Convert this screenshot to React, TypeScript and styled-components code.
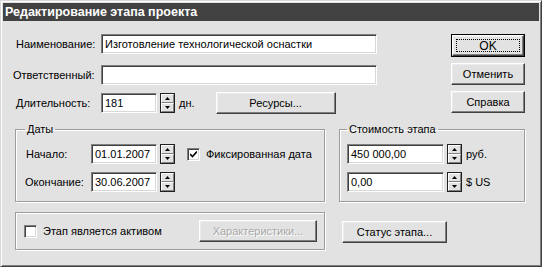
import React from "react";
import styled, { createGlobalStyle, css } from "styled-components";

const GlobalStyle = createGlobalStyle`
  html, body {
    margin: 0;
    padding: 0;
    background: #e2e2e2;
  }
  body {
    font-family: "Liberation Sans", Arial, sans-serif;
    font-size: 11px;
    color: #000;
  }
  * {
    box-sizing: border-box;
  }
`;

const raised = css`
  border-top: 1px solid #ffffff;
  border-left: 1px solid #ffffff;
  border-right: 1px solid #404040;
  border-bottom: 1px solid #404040;
  box-shadow: inset -1px -1px 0 #808080, inset 1px 1px 0 #ececec;
`;

const sunken = css`
  border-top: 1px solid #808080;
  border-left: 1px solid #808080;
  border-right: 1px solid #ffffff;
  border-bottom: 1px solid #ffffff;
  box-shadow: inset 1px 1px 0 #404040, inset -1px -1px 0 #d8d8d8;
`;

const Window = styled.div`
  width: 542px;
  height: 267px;
  display: flex;
  flex-direction: column;
  background: #e2e2e2;
  border-top: 1px solid #d8d8d8;
  border-left: 1px solid #d8d8d8;
  border-right: 1px solid #404040;
  border-bottom: 1px solid #404040;
  box-shadow: inset 1px 1px 0 #ffffff, inset -1px -1px 0 #808080;
  padding: 2px;
`;

const TitleBar = styled.div`
  height: 18px;
  flex-shrink: 0;
  background: #424242;
  color: #ffffff;
  font-weight: bold;
  font-size: 12.5px;
  line-height: 18px;
  padding-left: 2px;
`;

const Body = styled.div`
  flex: 1;
  display: flex;
  flex-direction: column;
  padding: 13px 14px 0 12px;
`;

const TopSection = styled.div`
  display: flex;
  justify-content: space-between;
`;

const Fields = styled.div`
  width: 362px;
  display: flex;
  flex-direction: column;
`;

const FieldRow = styled.div<{ $h?: number; $mb?: number }>`
  display: flex;
  align-items: center;
  height: ${({ $h }) => $h ?? 20}px;
  margin-bottom: ${({ $mb }) => $mb ?? 0}px;
`;

const Label = styled.span<{ $w: number; $indent?: number }>`
  width: ${({ $w }) => $w}px;
  padding-left: ${({ $indent }) => Math.max($indent ?? 0, 0)}px;
  margin-left: ${({ $indent }) => Math.min($indent ?? 0, 0)}px;
  margin-right: ${({ $indent }) => -Math.min($indent ?? 0, 0)}px;
  flex-shrink: 0;
  white-space: nowrap;
`;

const TextBox = styled.div<{ $w?: number }>`
  ${sunken};
  width: ${({ $w }) => ($w ? `${$w}px` : "auto")};
  flex: ${({ $w }) => ($w ? "none" : "1")};
  height: 20px;
  background: #ffffff;
  padding: 0 3px;
  line-height: 18px;
  white-space: nowrap;
  overflow: hidden;
`;

const Unit = styled.span`
  margin-left: 4px;
`;

const ButtonColumn = styled.div`
  display: flex;
  flex-direction: column;
  gap: 6px;
`;

const Button = styled.div<{ $w: number; $disabled?: boolean }>`
  ${raised};
  width: ${({ $w }) => $w}px;
  height: 22px;
  display: flex;
  align-items: center;
  justify-content: center;
  background: #e2e2e2;
  flex-shrink: 0;
  color: ${({ $disabled }) => ($disabled ? "#a8a8a8" : "#000")};
  text-shadow: ${({ $disabled }) => ($disabled ? "1px 1px 0 #ffffff" : "none")};
`;

const ResourcesButton = styled(Button)`
  margin-left: 21px;
`;

const DefaultButton = styled.div`
  width: 74px;
  height: 23px;
  border: 1px solid #000;
  display: flex;
`;

const DefaultInner = styled.div`
  ${raised};
  flex: 1;
  padding: 3px;
  display: flex;
`;

const FocusRect = styled.div`
  flex: 1;
  border: 1px dotted #000;
  display: flex;
  align-items: center;
  justify-content: center;
  font-size: 12px;
`;

const Spin = styled.div`
  width: 15px;
  height: 20px;
  margin-left: 3px;
  border: 1px solid #202020;
  display: flex;
  flex-direction: column;
  flex-shrink: 0;
`;

const SpinHalf = styled.div`
  flex: 1;
  display: flex;
  align-items: center;
  justify-content: center;
  background: #e2e2e2;
  border-top: 1px solid #ffffff;
  border-left: 1px solid #ffffff;
  border-bottom: 1px solid #808080;
  border-right: 1px solid #808080;
`;

const GroupsRow = styled.div`
  display: flex;
  gap: 14px;
  margin-top: 9px;
`;

const Group = styled.fieldset<{ $w?: number }>`
  margin: 0;
  width: ${({ $w }) => ($w ? `${$w}px` : "auto")};
  flex: ${({ $w }) => ($w ? "none" : "1")};
  border: 1px solid #9c9c9c;
  box-shadow: 1px 1px 0 #ffffff, inset 1px 1px 0 #ffffff;
  padding: 0 7px 9px 9px;
  min-width: 0;
`;

const CostGroup = styled(Group)`
  padding-left: 7px;
`;

const Legend = styled.legend`
  padding: 0 2px;
  margin-left: 0;
  line-height: 13px;
  font-size: 11px;
`;

const GroupBody = styled.div`
  display: flex;
  flex-direction: column;
  gap: 8px;
  padding-top: 8px;
`;

const CheckBox = styled.div`
  ${sunken};
  width: 13px;
  height: 13px;
  background: #ffffff;
  display: flex;
  align-items: center;
  justify-content: center;
  flex-shrink: 0;
`;

const CheckLabel = styled.label<{ $ml: number }>`
  display: flex;
  align-items: center;
  gap: 6px;
  margin-left: ${({ $ml }) => $ml}px;
  white-space: nowrap;
`;

const BottomRow = styled.div`
  display: flex;
  align-items: flex-start;
  gap: 17px;
  margin-top: 10px;
`;

const BottomGroup = styled.div`
  width: 310px;
  height: 38px;
  border: 1px solid #9c9c9c;
  box-shadow: 1px 1px 0 #ffffff, inset 1px 1px 0 #ffffff;
  display: flex;
  align-items: center;
  justify-content: space-between;
  padding: 0 7px 0 7px;
`;

const StatusButton = styled(Button)`
  margin-top: 9px;
`;

const Arrow = ({ up }: { up?: boolean }) => (
  <svg width="5" height="3" viewBox="0 0 5 3">
    <path d={up ? "M2.5 0 L5 3 L0 3 Z" : "M0 0 L5 0 L2.5 3 Z"} fill="#000" />
  </svg>
);

const Spinner = () => (
  <Spin>
    <SpinHalf>
      <Arrow up />
    </SpinHalf>
    <SpinHalf>
      <Arrow />
    </SpinHalf>
  </Spin>
);

const Check = ({ checked }: { checked?: boolean }) => (
  <CheckBox>
    {checked && (
      <svg width="7" height="7" viewBox="0 0 7 7">
        <path d="M0 3 L2.5 5.5 L7 0.5" stroke="#000" strokeWidth="1.6" fill="none" />
      </svg>
    )}
  </CheckBox>
);

export default function App() {
  return (
    <>
      <GlobalStyle />
      <Window>
        <TitleBar>Редактирование этапа проекта</TitleBar>
        <Body>
          <TopSection>
            <Fields>
              <FieldRow $mb={11}>
                <Label $w={86} $indent={1}>Наименование:</Label>
                <TextBox>Изготовление технологической оснастки</TextBox>
              </FieldRow>
              <FieldRow $mb={7}>
                <Label $w={86} $indent={-2}>Ответственный:</Label>
                <TextBox />
              </FieldRow>
              <FieldRow $h={22}>
                <Label $w={86} $indent={1}>Длительность:</Label>
                <TextBox $w={56}>181</TextBox>
                <Spinner />
                <Unit>дн.</Unit>
                <ResourcesButton $w={120}>Ресурсы...</ResourcesButton>
              </FieldRow>
            </Fields>
            <ButtonColumn>
              <DefaultButton>
                <DefaultInner>
                  <FocusRect>OK</FocusRect>
                </DefaultInner>
              </DefaultButton>
              <Button $w={74}>Отменить</Button>
              <Button $w={74}>Справка</Button>
            </ButtonColumn>
          </TopSection>

          <GroupsRow>
            <Group $w={310}>
              <Legend>Даты</Legend>
              <GroupBody>
                <FieldRow>
                  <Label $w={66} $indent={1}>Начало:</Label>
                  <TextBox $w={66}>01.01.2007</TextBox>
                  <Spinner />
                  <CheckLabel $ml={12}>
                    <Check checked />
                    Фиксированная дата
                  </CheckLabel>
                </FieldRow>
                <FieldRow>
                  <Label $w={66}>Окончание:</Label>
                  <TextBox $w={66}>30.06.2007</TextBox>
                  <Spinner />
                </FieldRow>
              </GroupBody>
            </Group>
            <CostGroup>
              <Legend>Стоимость этапа</Legend>
              <GroupBody>
                <FieldRow>
                  <TextBox $w={97}>450 000,00</TextBox>
                  <Spinner />
                  <Unit>руб.</Unit>
                </FieldRow>
                <FieldRow>
                  <TextBox $w={97}>0,00</TextBox>
                  <Spinner />
                  <Unit>$ US</Unit>
                </FieldRow>
              </GroupBody>
            </CostGroup>
          </GroupsRow>

          <BottomRow>
            <BottomGroup>
              <CheckLabel $ml={1}>
                <Check />
                Этап является активом
              </CheckLabel>
              <Button $w={118} $disabled>
                Характеристики...
              </Button>
            </BottomGroup>
            <StatusButton $w={105}>Статус этапа...</StatusButton>
          </BottomRow>
        </Body>
      </Window>
    </>
  );
}
